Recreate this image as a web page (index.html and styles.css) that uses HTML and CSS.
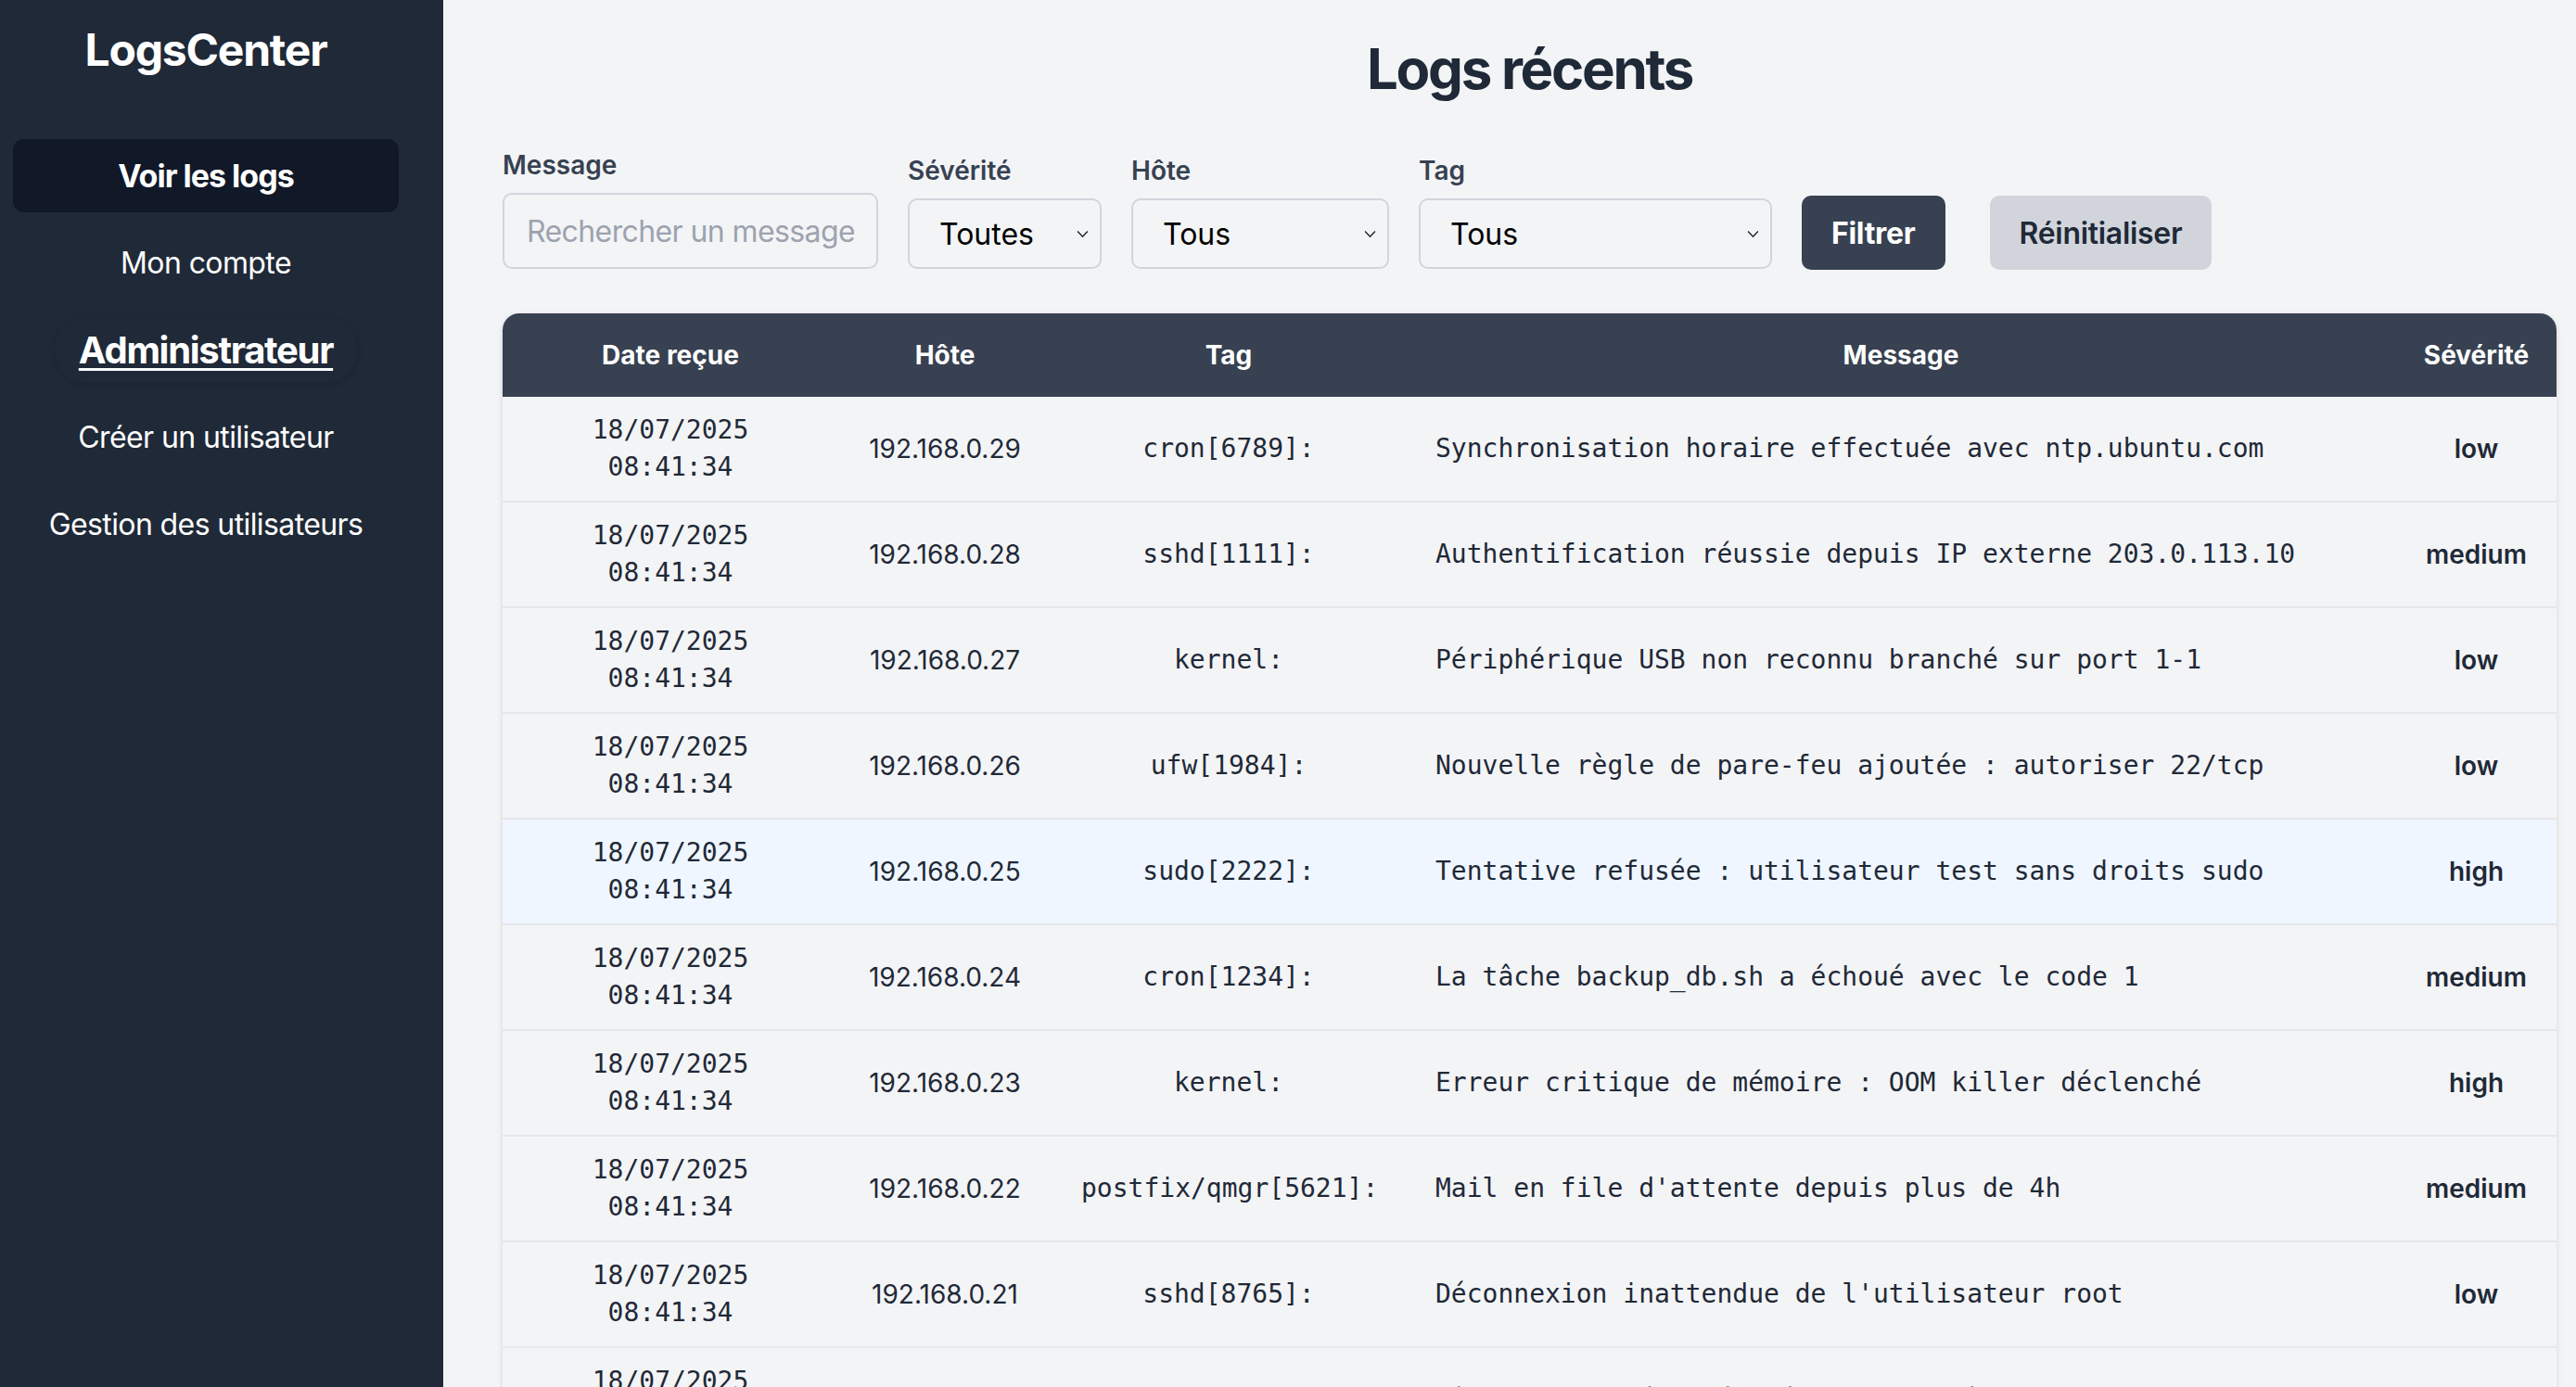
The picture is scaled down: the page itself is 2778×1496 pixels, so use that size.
FILE: index.html
```html
<!DOCTYPE html>
<html lang="fr">
<head>
<meta charset="utf-8">
<title>LogsCenter</title>
<link rel="stylesheet" href="styles.css">
</head>
<body>
<div class="layout">
  <aside class="sidebar">
    <h1 class="brand">LogsCenter</h1>
    <nav class="nav">
      <a class="nav-item active" href="#">Voir les logs</a>
      <a class="nav-item" href="#">Mon compte</a>
      <a class="nav-item admin" href="#">Administrateur</a>
      <a class="nav-item" href="#">Créer un utilisateur</a>
      <a class="nav-item" href="#">Gestion des utilisateurs</a>
    </nav>
  </aside>
  <main class="main">
    <h2 class="title">Logs récents</h2>
    <form class="filters">
      <div class="field">
        <label class="label">Message</label>
        <input class="input" type="text" placeholder="Rechercher un message...">
      </div>
      <div class="field">
        <label class="label">Sévérité</label>
        <div class="select select-sev"><span>Toutes</span><svg class="chev" viewBox="0 0 12 8" width="13" height="9"><path d="M1 1.2 L6 6.5 L11 1.2" fill="none" stroke="#222" stroke-width="1.3"/></svg></div>
      </div>
      <div class="field">
        <label class="label">Hôte</label>
        <div class="select select-host"><span>Tous</span><svg class="chev" viewBox="0 0 12 8" width="13" height="9"><path d="M1 1.2 L6 6.5 L11 1.2" fill="none" stroke="#222" stroke-width="1.3"/></svg></div>
      </div>
      <div class="field">
        <label class="label">Tag</label>
        <div class="select select-tag"><span>Tous</span><svg class="chev" viewBox="0 0 12 8" width="13" height="9"><path d="M1 1.2 L6 6.5 L11 1.2" fill="none" stroke="#222" stroke-width="1.3"/></svg></div>
      </div>
      <button class="btn btn-primary" type="button">Filtrer</button>
      <button class="btn btn-secondary" type="button">Réinitialiser</button>
    </form>
    <div class="table-wrap">
      <table class="logs">
        <colgroup>
          <col class="c-date"><col class="c-host"><col class="c-tag"><col class="c-msg"><col class="c-sev">
        </colgroup>
        <thead>
          <tr><th>Date reçue</th><th>Hôte</th><th>Tag</th><th>Message</th><th class="sev-col">Sévérité</th></tr>
        </thead>
        <tbody>
          <tr><td class="mono">18/07/2025<br>08:41:34</td><td>192.168.0.29</td><td class="mono">cron[6789]:</td><td class="mono msg">Synchronisation horaire effectuée avec ntp.ubuntu.com</td><td class="sev sev-col">low</td></tr>
          <tr><td class="mono">18/07/2025<br>08:41:34</td><td>192.168.0.28</td><td class="mono">sshd[1111]:</td><td class="mono msg">Authentification réussie depuis IP externe 203.0.113.10</td><td class="sev sev-col">medium</td></tr>
          <tr><td class="mono">18/07/2025<br>08:41:34</td><td>192.168.0.27</td><td class="mono">kernel:</td><td class="mono msg">Périphérique USB non reconnu branché sur port 1-1</td><td class="sev sev-col">low</td></tr>
          <tr><td class="mono">18/07/2025<br>08:41:34</td><td>192.168.0.26</td><td class="mono">ufw[1984]:</td><td class="mono msg">Nouvelle règle de pare-feu ajoutée : autoriser 22/tcp</td><td class="sev sev-col">low</td></tr>
          <tr class="hovered"><td class="mono">18/07/2025<br>08:41:34</td><td>192.168.0.25</td><td class="mono">sudo[2222]:</td><td class="mono msg">Tentative refusée : utilisateur test sans droits sudo</td><td class="sev sev-col">high</td></tr>
          <tr><td class="mono">18/07/2025<br>08:41:34</td><td>192.168.0.24</td><td class="mono">cron[1234]:</td><td class="mono msg">La tâche backup_db.sh a échoué avec le code 1</td><td class="sev sev-col">medium</td></tr>
          <tr><td class="mono">18/07/2025<br>08:41:34</td><td>192.168.0.23</td><td class="mono">kernel:</td><td class="mono msg">Erreur critique de mémoire : OOM killer déclenché</td><td class="sev sev-col">high</td></tr>
          <tr><td class="mono">18/07/2025<br>08:41:34</td><td>192.168.0.22</td><td class="mono">postfix/qmgr[5621]:</td><td class="mono msg">Mail en file d'attente depuis plus de 4h</td><td class="sev sev-col">medium</td></tr>
          <tr><td class="mono">18/07/2025<br>08:41:34</td><td>192.168.0.21</td><td class="mono">sshd[8765]:</td><td class="mono msg">Déconnexion inattendue de l'utilisateur root</td><td class="sev sev-col">low</td></tr>
          <tr><td class="mono">18/07/2025<br>08:41:34</td><td>192.168.0.20</td><td class="mono">cron[4321]:</td><td class="mono msg">Tâche planifiée exécutée avec succès</td><td class="sev sev-col">low</td></tr>
        </tbody>
      </table>
    </div>
  </main>
</div>
</body>
</html>
```
FILE: styles.css
```css
* { box-sizing: border-box; }
html, body { margin: 0; padding: 0; }
body {
  font-family: Inter, "Noto Sans", sans-serif;
  background: #f3f4f6;
  color: #1f2937;
}
.layout {
  display: flex;
  min-height: 100vh;
}
.sidebar {
  width: 478px;
  flex: none;
  background: #1f2937;
  color: #fff;
  padding: 22px 48px 0 14px;
}
.brand {
  margin: 0 0 64px;
  font-size: 48px;
  line-height: 64px;
  font-weight: 700;
  text-align: center;
  letter-spacing: -1.2px;
}
.nav {
  display: flex;
  flex-direction: column;
  gap: 15px;
}
.nav-item {
  height: 79px;
  display: flex;
  align-items: center;
  justify-content: center;
  border-radius: 12px;
  font-size: 32px;
  letter-spacing: -0.6px;
  color: #fff;
  text-decoration: none;
  white-space: nowrap;
}
.nav-item.active {
  background: #111827;
  font-size: 34px;
  letter-spacing: -1px;
  font-weight: 700;
}
.nav-item.admin {
  align-self: center;
  height: 71px;
  margin: 4px 0;
  padding: 0 26px;
  border-radius: 36px;
  font-size: 40px;
  letter-spacing: -1.3px;
  font-weight: 700;
  text-decoration: underline;
  text-decoration-thickness: 3px;
  text-underline-offset: 5px;
  box-shadow: 0 2px 8px rgba(0, 0, 0, 0.12);
}
.main {
  flex: 1;
  min-width: 0;
  padding: 38px 21px 0 64px;
}
.title {
  margin: 0 0 48px;
  text-align: center;
  font-size: 60px;
  line-height: 72px;
  font-weight: 700;
  letter-spacing: -2.3px;
  color: #1f2937;
}
.filters {
  display: flex;
  align-items: flex-end;
  gap: 32px;
  margin: 0 0 48px;
}
.field {
  display: flex;
  flex-direction: column;
}
.label {
  font-size: 28px;
  line-height: 40px;
  font-weight: 600;
  color: #374151;
  margin-bottom: 10px;
}
.input {
  width: 405px;
  height: 82px;
  border: 2px solid #d1d5db;
  border-radius: 10px;
  padding: 0 24px;
  font-family: Inter, "Noto Sans", sans-serif;
  font-size: 32px;
  letter-spacing: -0.6px;
  background: transparent;
  color: #111827;
  outline: none;
}
.input::placeholder { color: #9ca3af; }
.select {
  height: 76px;
  border: 2px solid #d1d5db;
  border-radius: 10px;
  padding: 0 12px 0 32px;
  display: flex;
  align-items: center;
  justify-content: space-between;
  font-size: 32px;
  color: #000;
}
.select-sev { width: 209px; }
.select-host { width: 278px; }
.select-tag { width: 381px; }
.chev { flex: none; }
.btn {
  height: 80px;
  padding: 0 32px;
  border: none;
  border-radius: 10px;
  font-family: Inter, "Noto Sans", sans-serif;
  font-size: 32px;
  letter-spacing: -0.3px;
  margin-bottom: -1px;
}
.btn-primary {
  background: #374151;
  color: #fff;
  font-weight: 700;
}
.btn-secondary {
  background: #d1d5db;
  color: #1f2937;
  font-weight: 600;
  margin-left: 16px;
}
.table-wrap {
  width: 2215px;
  border-radius: 18px 18px 0 0;
  overflow: hidden;
  box-shadow: 0 2px 6px rgba(0, 0, 0, 0.12);
}
.logs {
  width: 100%;
  table-layout: fixed;
  border-collapse: separate;
  border-spacing: 0;
}
.c-date { width: 362px; }
.c-host { width: 230px; }
.c-tag { width: 382px; }
.c-msg { width: 1068px; }
.c-sev { width: 173px; }
.logs th {
  background: #374151;
  color: #fff;
  font-size: 28px;
  line-height: 40px;
  font-weight: 700;
  padding: 25px 32px;
  text-align: center;
}
.logs td {
  padding: 16px 32px;
  font-size: 28px;
  line-height: 40px;
  text-align: center;
  vertical-align: middle;
  border-bottom: 2px solid #e5e7eb;
  color: #1f2937;
  white-space: nowrap;
}
.logs .sev-col { padding-left: 8px; padding-right: 8px; }
.logs td.mono { font-family: "DejaVu Sans Mono", "Liberation Mono", monospace; }
.logs td.msg { text-align: left; }
.logs td.sev { font-weight: 600; }
.logs tr.hovered td { background: #eff6ff; }
```
